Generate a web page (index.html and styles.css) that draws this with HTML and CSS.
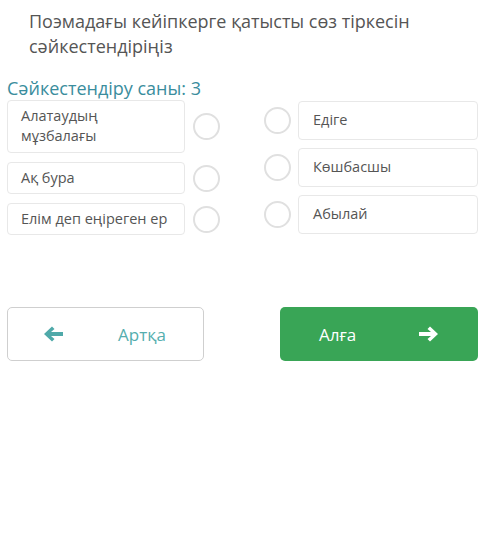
FILE: index.html
```html
<!DOCTYPE html>
<html>
	<head>
		<meta charset="utf-8">
		<title>Сәйкестендіру</title>
		<link rel="stylesheet" href="styles.css">
	</head>
	<body>
	<div class="page">
		<h1 class="question">Поэмадағы кейіпкерге қатысты сөз тіркесін сәйкестендіріңіз</h1>
		<div class="count">Сәйкестендіру саны: 3</div>
		<div class="match">
			<div class="col left">
				<div class="row"><div class="item tall">Алатаудың<br>мұзбалағы</div><span class="dot"></span></div>
				<div class="row"><div class="item">Ақ бура</div><span class="dot"></span></div>
				<div class="row"><div class="item">Елім деп еңіреген ер</div><span class="dot"></span></div>
			</div>
			<div class="col right">
				<div class="row"><span class="dot"></span><div class="item">Едіге</div></div>
				<div class="row"><span class="dot"></span><div class="item">Көшбасшы</div></div>
				<div class="row"><span class="dot"></span><div class="item">Абылай</div></div>
			</div>
		</div>
		<div class="nav">
			<button class="btn back">
				<svg width="20" height="16" viewBox="0 0 20 16"><path d="M0 8 L8 0.5 L10.5 3 L7 6 H19 V10 H7 L10.5 13 L8 15.5 Z" fill="#4fa9a9"/></svg>
				<span>Артқа</span>
			</button>
			<button class="btn next">
				<span>Алға</span>
				<svg width="20" height="16" viewBox="0 0 20 16"><path d="M20 8 L12 0.5 L9.5 3 L13 6 H1 V10 H13 L9.5 13 L12 15.5 Z" fill="#fff"/></svg>
			</button>
		</div>
	</div>
	</body>
</html>
```

FILE: styles.css
```css
html, body{
	margin: 0;
	background: #fff;
}

body{
	font-family: "Open Sans", "Noto Sans", sans-serif;
	color: #555;
}

.page{
	padding: 9px 22px 0 7px;
}

.question{
	margin: 0 0 0 22px;
	font-size: 18px;
	font-weight: normal;
	line-height: 25px;
	color: #555;
	width: 400px;
}

.count{
	margin-top: 18px;
	font-size: 18px;
	line-height: 22px;
	color: #3a8d9d;
}

.match{
	display: flex;
	justify-content: space-between;
	margin-top: 1px;
}

.col{
	display: flex;
	flex-direction: column;
}

.left{
	width: 214px;
	gap: 9px;
}

.right{
	width: 214px;
	gap: 8px;
	margin-top: 1px;
}

.row{
	display: flex;
	align-items: center;
	justify-content: space-between;
}

.item{
	box-sizing: border-box;
	border: 1px solid #e8e8e8;
	border-radius: 4px;
	font-size: 14.5px;
	line-height: 20px;
	padding: 5px 6px 5px 13px;
	background: #fff;
	white-space: nowrap;
}

.left .item{
	width: 178px;
}

.right .item{
	width: 180px;
	padding: 8px 14px 9px;
}

.item.tall{
	padding: 5px 13px 6px;
}

.dot{
	box-sizing: border-box;
	width: 27px;
	height: 27px;
	border: 2px solid #e0e0e0;
	border-radius: 50%;
	margin-right: 1px;
}

.right .dot{
	margin: 0;
}

.nav{
	display: flex;
	justify-content: space-between;
	margin-top: 72px;
}

.btn{
	box-sizing: border-box;
	width: 197px;
	height: 54px;
	border-radius: 5px;
	font-family: "Open Sans", "Noto Sans", sans-serif;
	font-size: 17px;
	display: flex;
	align-items: center;
	cursor: pointer;
}

.back{
	background: #fff;
	border: 1px solid #cfcfcf;
	color: #55aeae;
	padding: 0 0 0 36px;
	gap: 54px;
}

.next{
	width: 198px;
	background: #39a556;
	border: none;
	color: #fff;
	padding: 0 0 0 39px;
	gap: 62px;
}
```
